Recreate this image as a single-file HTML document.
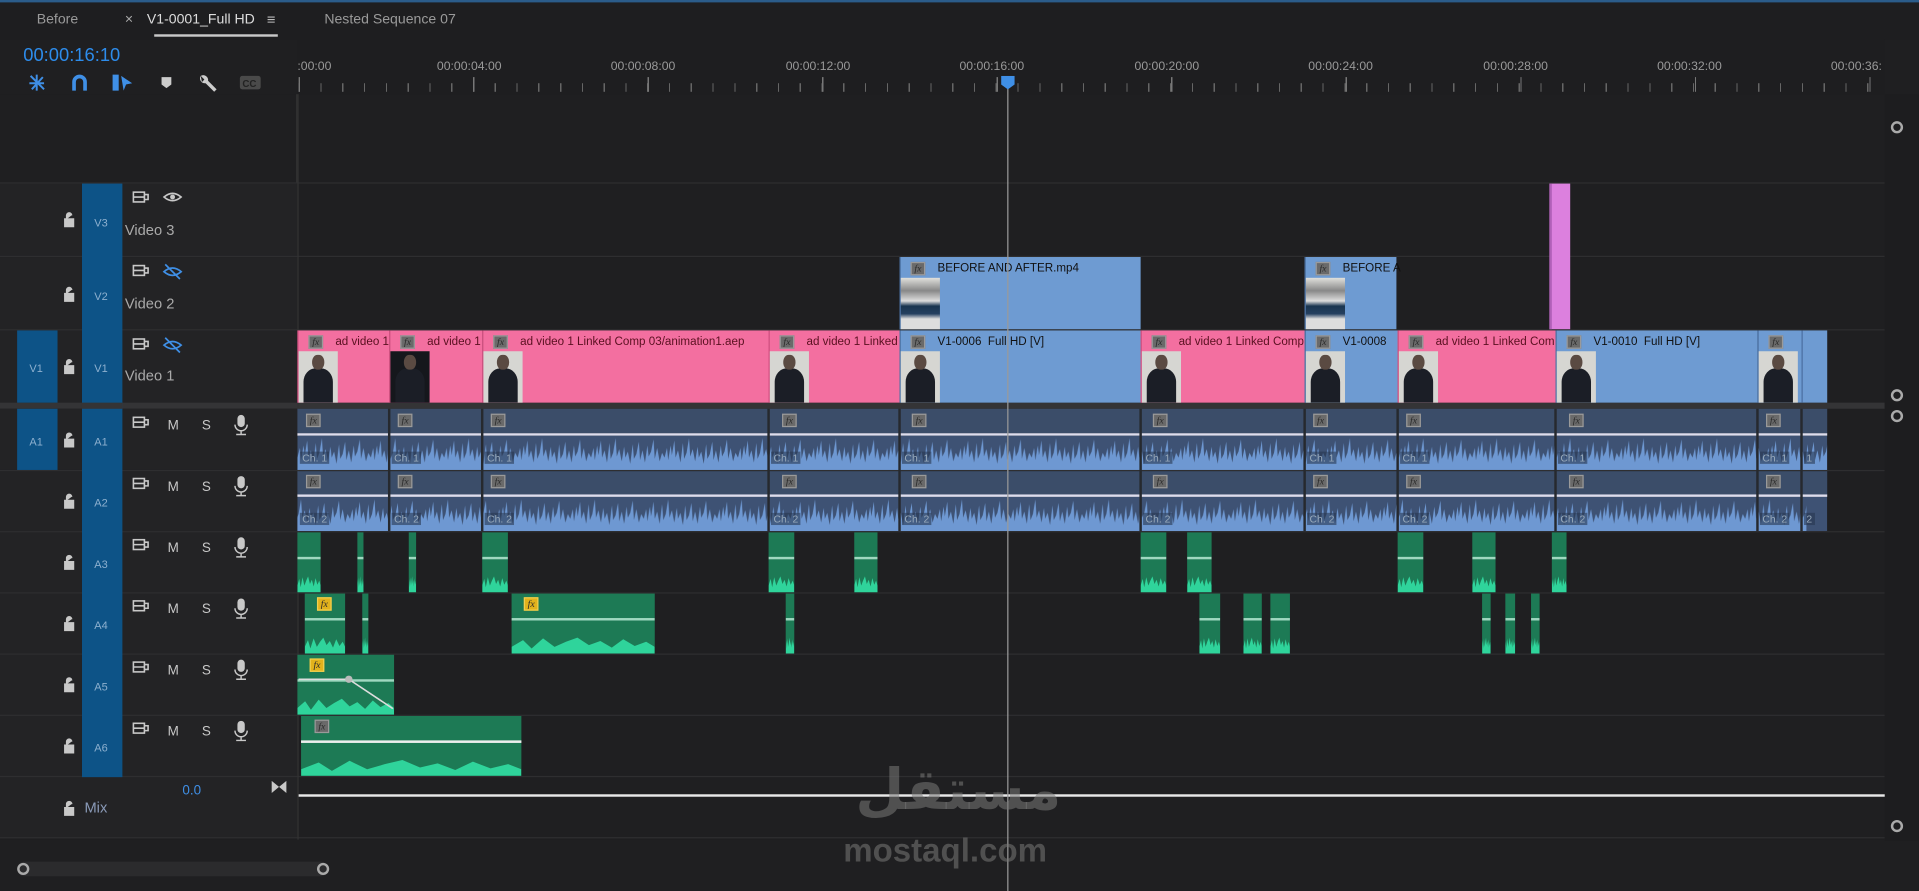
<!DOCTYPE html>
<html><head><meta charset="utf-8">
<style>
*{box-sizing:border-box;margin:0;padding:0}
html,body{width:1919px;height:891px;overflow:hidden;background:#1f1f21}
#s{position:absolute;left:0;top:0;width:1568px;height:728px;transform:scale(1.22385);transform-origin:0 0;background:#1f1f21;font-family:"Liberation Sans",sans-serif;color:#aaa;overflow:hidden}
.a{position:absolute}
.t{position:absolute;font-size:11px;white-space:nowrap}
.row{position:absolute;left:0;width:1540px;border-bottom:1px solid #2e2e30}
.hd{position:absolute;left:0;width:243px;background:#232325}
.blue{position:absolute;background:#0d5387}
.lbl{position:absolute;font-size:9px;color:#8db0cf}
.pk{position:absolute;top:270px;height:59px;background:#f36fa0;border-left:1px solid #d05080}
.bl{position:absolute;height:59px;background:#6e9bd2;border-left:1px solid #4a6fa0}
.fx{position:absolute;width:12px;height:11px;background:#6a6a6a;border:1px solid #9a9a9a;font-size:8px;font-style:italic;color:#2a2a2a;line-height:9px;text-align:center;font-family:"Liberation Serif",serif}
.ct{position:absolute;top:4px;left:30px;font-size:9.5px;color:#5a1020;white-space:nowrap;overflow:hidden}
.bl .ct{color:#111}
.th{position:absolute;left:0;bottom:0;width:32px;height:42px;background:#d6d6d2;overflow:hidden}
.th:before{content:"";position:absolute;left:12%;width:76%;top:34%;bottom:0;background:#1b1e26;border-radius:40% 40% 0 0}
.th:after{content:"";position:absolute;left:35%;width:30%;top:6%;height:30%;background:#5a4a42;border-radius:45%}
.th.k{background:#15171c}
.th.b{background:linear-gradient(#e0e0dc 0,#888 25%,#ddd 45%,#1a3550 55%,#254060 70%,#ddd 80%)}
.th.b:before,.th.b:after{display:none}
.g{position:absolute;background:#1d7a55;overflow:hidden}
.g:before{content:"";position:absolute;left:0;right:0;top:40%;height:2px;background:#9fd8c0}
.g:after{content:"";position:absolute;left:0;right:0;bottom:0;height:28%;background:#2fd49b;clip-path:polygon(0 100%,0 60%,8% 20%,14% 70%,22% 10%,30% 60%,38% 30%,46% 5%,54% 50%,62% 25%,70% 65%,78% 15%,86% 55%,94% 30%,100% 60%,100% 100%)}
.dv{position:absolute;width:2px;background:#26292e}
.ch{position:absolute;font-size:8.5px;color:#9ab;background:rgba(40,55,80,.6);padding:0 2px}
</style></head><body><div id="s">
<svg width="0" height="0" style="position:absolute"><defs>
<pattern id="wb" width="60" height="28" patternUnits="userSpaceOnUse"><path fill="#6e98d2" d="M0 28 L0 18 L2 10 L3 20 L5 8 L6 16 L8 4 L9 18 L11 12 L13 22 L15 6 L16 19 L18 14 L20 2 L21 17 L23 11 L25 21 L27 9 L28 18 L30 13 L32 23 L34 7 L35 19 L37 15 L39 5 L40 20 L42 12 L44 22 L46 8 L47 17 L49 13 L51 3 L52 19 L54 10 L56 21 L58 14 L60 18 L60 28Z"/></pattern>
</defs></svg>

<div class="a" style="left:0;top:0;width:1568px;height:2px;background:#2b5c8a"></div>
<div class="a" style="left:0;top:2px;width:1568px;height:30px;background:#1e1e20"></div>
<div class="t" style="left:30px;top:10px;font-size:11.5px;color:#9a9a9a">Before</div>
<div class="t" style="left:102px;top:10px;font-size:11.5px;color:#aaa">×</div>
<div class="t" style="left:120px;top:10px;font-size:11.5px;color:#ddd">V1-0001_Full HD</div>
<div class="t" style="left:218px;top:9px;font-size:12px;color:#bbb">≡</div>
<div class="a" style="left:126px;top:28px;width:101px;height:2px;background:#c8c8c8"></div>
<div class="t" style="left:265px;top:10px;font-size:11.5px;color:#9a9a9a">Nested Sequence 07</div>

<div class="t" style="left:19px;top:37px;font-size:15px;color:#2d8ceb">00:00:16:10</div>
<svg class="a" style="left:22px;top:59px" width="200" height="18">
<g stroke="#3f8fe6" stroke-width="1.6" fill="none"><path d="M3 3 L14 14 M8 2 V15 M2 9 H14 M4 14 L13 4"/></g>
<path d="M37 15 V8 a6 6 0 0 1 12 0 V15 H46 V8 a3 3 0 0 0 -6 0 V15Z" fill="#3f8fe6"/>
<path d="M70 2 H75 V15 H70Z M77 3 L86 9 L81 10 L79 15Z" fill="#3f8fe6"/>
<path d="M110 4 H118 V10 L114 13 L110 10Z" fill="#ccc"/>
<path d="M142 3 a4 4 0 0 0 4 6 L153 16 L155 14 L148 7 a4 4 0 0 0 -6 -4 l3 3 -2 2z" fill="#ccc"/>
<rect x="174" y="3" width="17" height="11" rx="2" fill="#4a4a4a"/><text x="176" y="12" font-size="8" fill="#222" font-family="Liberation Sans" font-weight="bold">CC</text>
</svg>

<div class="a" style="left:243px;top:32px;width:1297px;height:45px;background:#1e1e20"></div>
<div class="t" style="left:243px;top:49px;font-size:10px;color:#999">:00:00</div>
<div class="t" style="left:357px;top:49px;font-size:10px;color:#999">00:00:04:00</div>
<div class="t" style="left:499px;top:49px;font-size:10px;color:#999">00:00:08:00</div>
<div class="t" style="left:642px;top:49px;font-size:10px;color:#999">00:00:12:00</div>
<div class="t" style="left:784px;top:49px;font-size:10px;color:#999">00:00:16:00</div>
<div class="t" style="left:927px;top:49px;font-size:10px;color:#999">00:00:20:00</div>
<div class="t" style="left:1069px;top:49px;font-size:10px;color:#999">00:00:24:00</div>
<div class="t" style="left:1212px;top:49px;font-size:10px;color:#999">00:00:28:00</div>
<div class="t" style="left:1354px;top:49px;font-size:10px;color:#999">00:00:32:00</div>
<div class="t" style="left:1496px;top:49px;font-size:10px;color:#999">00:00:36:</div>
<div class="a" style="left:244px;top:68px;width:1296px;height:7px;background:repeating-linear-gradient(90deg,#666 0 1px,transparent 1px 17.8px)"></div>
<div class="a" style="left:244px;top:63px;width:1296px;height:12px;background:repeating-linear-gradient(90deg,#777 0 1px,transparent 1px 142.6px)"></div>

<div class="a" style="left:0;top:77px;width:243px;height:73px;background:#1f1f21;border-right:1px solid #333"></div>

<div class="row" style="top:149px;height:1px"></div>
<div class="hd" style="top:150px;height:60px"></div>
<div class="hd" style="top:210px;height:60px"></div>
<div class="hd" style="top:270px;height:60px"></div>
<div class="row" style="top:150px;height:60px"></div>
<div class="row" style="top:210px;height:60px"></div>
<div class="a" style="left:0;top:329px;width:1540px;height:5px;background:#343436"></div>
<div class="hd" style="top:334px;height:50px"></div>
<div class="hd" style="top:385px;height:50px"></div>
<div class="hd" style="top:435px;height:50px"></div>
<div class="hd" style="top:485px;height:50px"></div>
<div class="hd" style="top:535px;height:50px"></div>
<div class="hd" style="top:585px;height:50px"></div>
<div class="hd" style="top:635px;height:50px"></div>
<div class="row" style="top:334px;height:51px"></div>
<div class="row" style="top:385px;height:50px"></div>
<div class="row" style="top:435px;height:50px"></div>
<div class="row" style="top:485px;height:50px"></div>
<div class="row" style="top:535px;height:50px"></div>
<div class="row" style="top:585px;height:50px"></div>
<div class="row" style="top:635px;height:50px"></div>
<div class="a" style="left:243px;top:77px;width:1px;height:610px;background:#333"></div>

<div class="blue" style="left:67px;top:150px;width:33px;height:485px"></div>
<div class="a" style="left:67px;top:329px;width:33px;height:5px;background:#343436"></div>
<div class="blue" style="left:14px;top:270px;width:33px;height:59px"></div>
<div class="blue" style="left:14px;top:334px;width:33px;height:50px"></div>
<div class="lbl" style="left:77px;top:177px">V3</div>
<div class="lbl" style="left:77px;top:237px">V2</div>
<div class="lbl" style="left:77px;top:296px">V1</div>
<div class="lbl" style="left:24px;top:296px">V1</div>
<div class="lbl" style="left:24px;top:356px">A1</div>
<div class="lbl" style="left:77px;top:356px">A1</div>
<div class="lbl" style="left:77px;top:406px">A2</div>
<div class="lbl" style="left:77px;top:456px">A3</div>
<div class="lbl" style="left:77px;top:506px">A4</div>
<div class="lbl" style="left:77px;top:556px">A5</div>
<div class="lbl" style="left:77px;top:606px">A6</div>
<div class="t" style="left:102px;top:181px;font-size:12px;color:#aaa">Video 3</div>
<div class="t" style="left:102px;top:241px;font-size:12px;color:#aaa">Video 2</div>
<div class="t" style="left:102px;top:300px;font-size:12px;color:#aaa">Video 1</div>
<svg class="a" style="left:0;top:0" width="243" height="700">
<g fill="#c8c8c8">
<g id="lk"><path d="M53 179 h7 v6 h-7z M54.5 179 v-3 a2 2 0 0 1 4 0" stroke="#c8c8c8" stroke-width="1.3" fill="#c8c8c8"/></g>
<use href="#lk" y="61"/><use href="#lk" y="120"/><use href="#lk" y="180"/><use href="#lk" y="230"/><use href="#lk" y="280"/><use href="#lk" y="330"/><use href="#lk" y="380"/><use href="#lk" y="430"/><use href="#lk" y="481"/>
</g>
<g fill="none" stroke="#c8c8c8" stroke-width="1.3">
<g id="fi"><rect x="109" y="157" width="9" height="8"/><path d="M118 159 h3 v4 h-3 M109 161 h9"/></g>
<use href="#fi" y="60"/><use href="#fi" y="120"/><use href="#fi" y="184"/><use href="#fi" y="234"/><use href="#fi" y="284"/><use href="#fi" y="334"/><use href="#fi" y="384"/><use href="#fi" y="434"/>
<path d="M134 161 q7 -6 14 0 q-7 6 -14 0z"/>
</g>
<circle cx="141" cy="161" r="2" fill="#c8c8c8"/>
<g stroke="#3f8fe6" stroke-width="1.4" fill="none"><path d="M134 222 q7 -6 14 0 q-7 6 -14 0z M135 216 L147 228"/><path d="M134 282 q7 -6 14 0 q-7 6 -14 0z M135 276 L147 288"/></g>
<g font-family="Liberation Sans" font-size="11" fill="#c8c8c8">
<g id="ms"><text x="137" y="351">M</text><text x="165" y="351">S</text><rect x="194" y="339" width="6" height="10" rx="3"/><path d="M192 347 a5 5 0 0 0 10 0 M197 352 v3 M193 355 h8" stroke="#c8c8c8" fill="none" stroke-width="1.2"/></g>
<use href="#ms" y="50"/><use href="#ms" y="100"/><use href="#ms" y="150"/><use href="#ms" y="200"/><use href="#ms" y="250"/>
</g>
<path d="M222 638 L228 643 L222 648Z M234 638 L228 643 L234 648Z" fill="#c8c8c8"/>
</svg>
<div class="t" style="left:149px;top:640px;font-size:11px;color:#3f8fe6">0.0</div>
<div class="t" style="left:69px;top:653px;font-size:12px;color:#8a9ab8">Mix</div>

<div class="a" style="left:1266px;top:150px;width:17px;height:119px;background:#dc80de;border-left:2px solid #b060b8"></div>

<div class="bl" style="left:735px;top:210px;width:197px"><div class="fx" style="left:8px;top:4px">fx</div><div class="ct">BEFORE AND AFTER.mp4</div><div class="th b"></div></div>
<div class="bl" style="left:1066px;top:210px;width:75px"><div class="fx" style="left:8px;top:4px">fx</div><div class="ct">BEFORE A</div><div class="th b"></div></div>

<div class="pk" style="left:243px;width:75px"><div class="fx" style="left:8px;top:4px">fx</div><div class="ct">ad video 1</div><div class="th"></div></div>
<div class="pk" style="left:318px;width:76px"><div class="fx" style="left:8px;top:4px">fx</div><div class="ct">ad video 1</div><div class="th k"></div></div>
<div class="pk" style="left:394px;width:234px"><div class="fx" style="left:8px;top:4px">fx</div><div class="ct">ad video 1 Linked Comp 03/animation1.aep</div><div class="th"></div></div>
<div class="pk" style="left:628px;width:107px"><div class="fx" style="left:8px;top:4px">fx</div><div class="ct">ad video 1 Linked</div><div class="th"></div></div>
<div class="bl" style="left:735px;top:270px;width:197px"><div class="fx" style="left:8px;top:4px">fx</div><div class="ct">V1-0006&nbsp; Full HD [V]</div><div class="th"></div></div>
<div class="pk" style="left:932px;width:134px"><div class="fx" style="left:8px;top:4px">fx</div><div class="ct">ad video 1 Linked Comp</div><div class="th"></div></div>
<div class="bl" style="left:1066px;top:270px;width:76px"><div class="fx" style="left:8px;top:4px">fx</div><div class="ct">V1-0008</div><div class="th"></div></div>
<div class="pk" style="left:1142px;width:129px"><div class="fx" style="left:8px;top:4px">fx</div><div class="ct">ad video 1 Linked Com</div><div class="th"></div></div>
<div class="bl" style="left:1271px;top:270px;width:165px"><div class="fx" style="left:8px;top:4px">fx</div><div class="ct">V1-0010&nbsp; Full HD [V]</div><div class="th"></div></div>
<div class="bl" style="left:1436px;top:270px;width:36px"><div class="fx" style="left:8px;top:4px">fx</div><div class="th"></div></div>
<div class="bl" style="left:1472px;top:270px;width:21px"></div>

<div class="a" style="left:243px;top:334px;width:1250px;height:20px;background:#3b4d69"></div>
<div class="a" style="left:243px;top:354px;width:1250px;height:2px;background:#dde"></div>
<svg class="a" style="left:243px;top:356px" width="1250" height="28"><rect width="1250" height="28" fill="#3e5274"/><rect width="1250" height="28" fill="url(#wb)"/></svg>
<div class="a" style="left:243px;top:385px;width:1250px;height:19px;background:#3b4d69"></div>
<div class="a" style="left:243px;top:404px;width:1250px;height:2px;background:#dde"></div>
<svg class="a" style="left:243px;top:406px" width="1250" height="28"><rect width="1250" height="28" fill="#3e5274"/><rect width="1250" height="28" fill="url(#wb)" transform="translate(-17 0)"/></svg>
<div class="dv" style="left:317px;top:334px;height:100px"></div>
<div class="dv" style="left:393px;top:334px;height:100px"></div>
<div class="dv" style="left:627px;top:334px;height:100px"></div>
<div class="dv" style="left:734px;top:334px;height:100px"></div>
<div class="dv" style="left:931px;top:334px;height:100px"></div>
<div class="dv" style="left:1065px;top:334px;height:100px"></div>
<div class="dv" style="left:1141px;top:334px;height:100px"></div>
<div class="dv" style="left:1270px;top:334px;height:100px"></div>
<div class="dv" style="left:1435px;top:334px;height:100px"></div>
<div class="dv" style="left:1471px;top:334px;height:100px"></div>
<div class="fx" style="left:250px;top:338px">fx</div><div class="fx" style="left:325px;top:338px">fx</div><div class="fx" style="left:401px;top:338px">fx</div><div class="fx" style="left:639px;top:338px">fx</div><div class="fx" style="left:745px;top:338px">fx</div><div class="fx" style="left:942px;top:338px">fx</div><div class="fx" style="left:1073px;top:338px">fx</div><div class="fx" style="left:1149px;top:338px">fx</div><div class="fx" style="left:1282px;top:338px">fx</div><div class="fx" style="left:1443px;top:338px">fx</div>
<div class="fx" style="left:250px;top:388px">fx</div><div class="fx" style="left:325px;top:388px">fx</div><div class="fx" style="left:401px;top:388px">fx</div><div class="fx" style="left:639px;top:388px">fx</div><div class="fx" style="left:745px;top:388px">fx</div><div class="fx" style="left:942px;top:388px">fx</div><div class="fx" style="left:1073px;top:388px">fx</div><div class="fx" style="left:1149px;top:388px">fx</div><div class="fx" style="left:1282px;top:388px">fx</div><div class="fx" style="left:1443px;top:388px">fx</div>
<div class="ch" style="left:245px;top:369px">Ch. 1</div><div class="ch" style="left:320px;top:369px">Ch. 1</div><div class="ch" style="left:396px;top:369px">Ch. 1</div><div class="ch" style="left:630px;top:369px">Ch. 1</div><div class="ch" style="left:737px;top:369px">Ch. 1</div><div class="ch" style="left:934px;top:369px">Ch. 1</div><div class="ch" style="left:1068px;top:369px">Ch. 1</div><div class="ch" style="left:1144px;top:369px">Ch. 1</div><div class="ch" style="left:1273px;top:369px">Ch. 1</div><div class="ch" style="left:1438px;top:369px">Ch. 1</div><div class="ch" style="left:1474px;top:369px">1</div>
<div class="ch" style="left:245px;top:419px">Ch. 2</div><div class="ch" style="left:320px;top:419px">Ch. 2</div><div class="ch" style="left:396px;top:419px">Ch. 2</div><div class="ch" style="left:630px;top:419px">Ch. 2</div><div class="ch" style="left:737px;top:419px">Ch. 2</div><div class="ch" style="left:934px;top:419px">Ch. 2</div><div class="ch" style="left:1068px;top:419px">Ch. 2</div><div class="ch" style="left:1144px;top:419px">Ch. 2</div><div class="ch" style="left:1273px;top:419px">Ch. 2</div><div class="ch" style="left:1438px;top:419px">Ch. 2</div><div class="ch" style="left:1474px;top:419px">2</div>

<div class="g" style="left:243px;top:435px;width:19px;height:49px"></div>
<div class="g" style="left:292px;top:435px;width:5px;height:49px"></div>
<div class="g" style="left:334px;top:435px;width:6px;height:49px"></div>
<div class="g" style="left:394px;top:435px;width:21px;height:49px"></div>
<div class="g" style="left:628px;top:435px;width:21px;height:49px"></div>
<div class="g" style="left:698px;top:435px;width:19px;height:49px"></div>
<div class="g" style="left:932px;top:435px;width:21px;height:49px"></div>
<div class="g" style="left:970px;top:435px;width:20px;height:49px"></div>
<div class="g" style="left:1142px;top:435px;width:21px;height:49px"></div>
<div class="g" style="left:1203px;top:435px;width:19px;height:49px"></div>
<div class="g" style="left:1268px;top:435px;width:12px;height:49px"></div>
<div class="g" style="left:249px;top:485px;width:33px;height:49px"></div>
<div class="g" style="left:296px;top:485px;width:5px;height:49px"></div>
<div class="g" style="left:418px;top:485px;width:117px;height:49px"></div>
<div class="g" style="left:642px;top:485px;width:7px;height:49px"></div>
<div class="g" style="left:980px;top:485px;width:17px;height:49px"></div>
<div class="g" style="left:1016px;top:485px;width:15px;height:49px"></div>
<div class="g" style="left:1038px;top:485px;width:16px;height:49px"></div>
<div class="g" style="left:1211px;top:485px;width:7px;height:49px"></div>
<div class="g" style="left:1230px;top:485px;width:8px;height:49px"></div>
<div class="g" style="left:1251px;top:485px;width:7px;height:49px"></div>
<div class="fx" style="left:259px;top:488px;background:#e2b21c;border-color:#f0cf50">fx</div>
<div class="fx" style="left:428px;top:488px;background:#e2b21c;border-color:#f0cf50">fx</div>
<div class="g" style="left:243px;top:535px;width:79px;height:49px"></div>
<div class="fx" style="left:253px;top:538px;background:#e2b21c;border-color:#f0cf50">fx</div>
<svg class="a" style="left:243px;top:535px" width="80" height="50"><path d="M1 20 H42 L78 44" stroke="#ddd" stroke-width="1.3" fill="none"/><circle cx="42" cy="20" r="3" fill="#bbb"/></svg>
<div class="g" style="left:246px;top:585px;width:180px;height:49px"></div>
<div class="fx" style="left:257px;top:588px">fx</div>
<div class="a" style="left:246px;top:605px;width:180px;height:2px;background:#eee"></div>

<div class="a" style="left:244px;top:649px;width:1299px;height:2px;background:#e8e8e8"></div>

<div class="a" style="left:0;top:686px;width:1568px;height:42px;background:#1f1f21"></div>
<div class="a" style="left:14px;top:704px;width:254px;height:12px;background:#2b2b2d;border-radius:6px"></div>
<div class="a" style="left:14px;top:705px;width:10px;height:10px;border:2px solid #aaa;border-radius:50%"></div>
<div class="a" style="left:259px;top:705px;width:10px;height:10px;border:2px solid #aaa;border-radius:50%"></div>

<div class="a" style="left:1540px;top:77px;width:28px;height:610px;background:#1d1d1f"></div>
<div class="a" style="left:1545px;top:99px;width:10px;height:10px;border:2px solid #aaa;border-radius:50%"></div>
<div class="a" style="left:1545px;top:318px;width:10px;height:10px;border:2px solid #aaa;border-radius:50%"></div>
<div class="a" style="left:1545px;top:335px;width:10px;height:10px;border:2px solid #aaa;border-radius:50%"></div>
<div class="a" style="left:1545px;top:670px;width:10px;height:10px;border:2px solid #aaa;border-radius:50%"></div>

<div class="a" style="left:823px;top:70px;width:1px;height:658px;background:#9a9a9a"></div>
<svg class="a" style="left:818px;top:62px" width="12" height="12"><path d="M0 0 H11 V7 L5.5 11 L0 7Z" fill="#3f8fe6"/></svg>

<div class="t" style="left:688px;top:618px;font-size:46px;font-weight:bold;color:rgba(120,120,120,.55);font-family:'DejaVu Sans',sans-serif;direction:rtl;width:190px;text-align:center">مستقل</div>
<div class="t" style="left:689px;top:680px;font-size:27px;font-weight:bold;color:rgba(120,120,120,.55);font-family:'Liberation Sans',sans-serif">mostaql.com</div>
</div></body></html>
